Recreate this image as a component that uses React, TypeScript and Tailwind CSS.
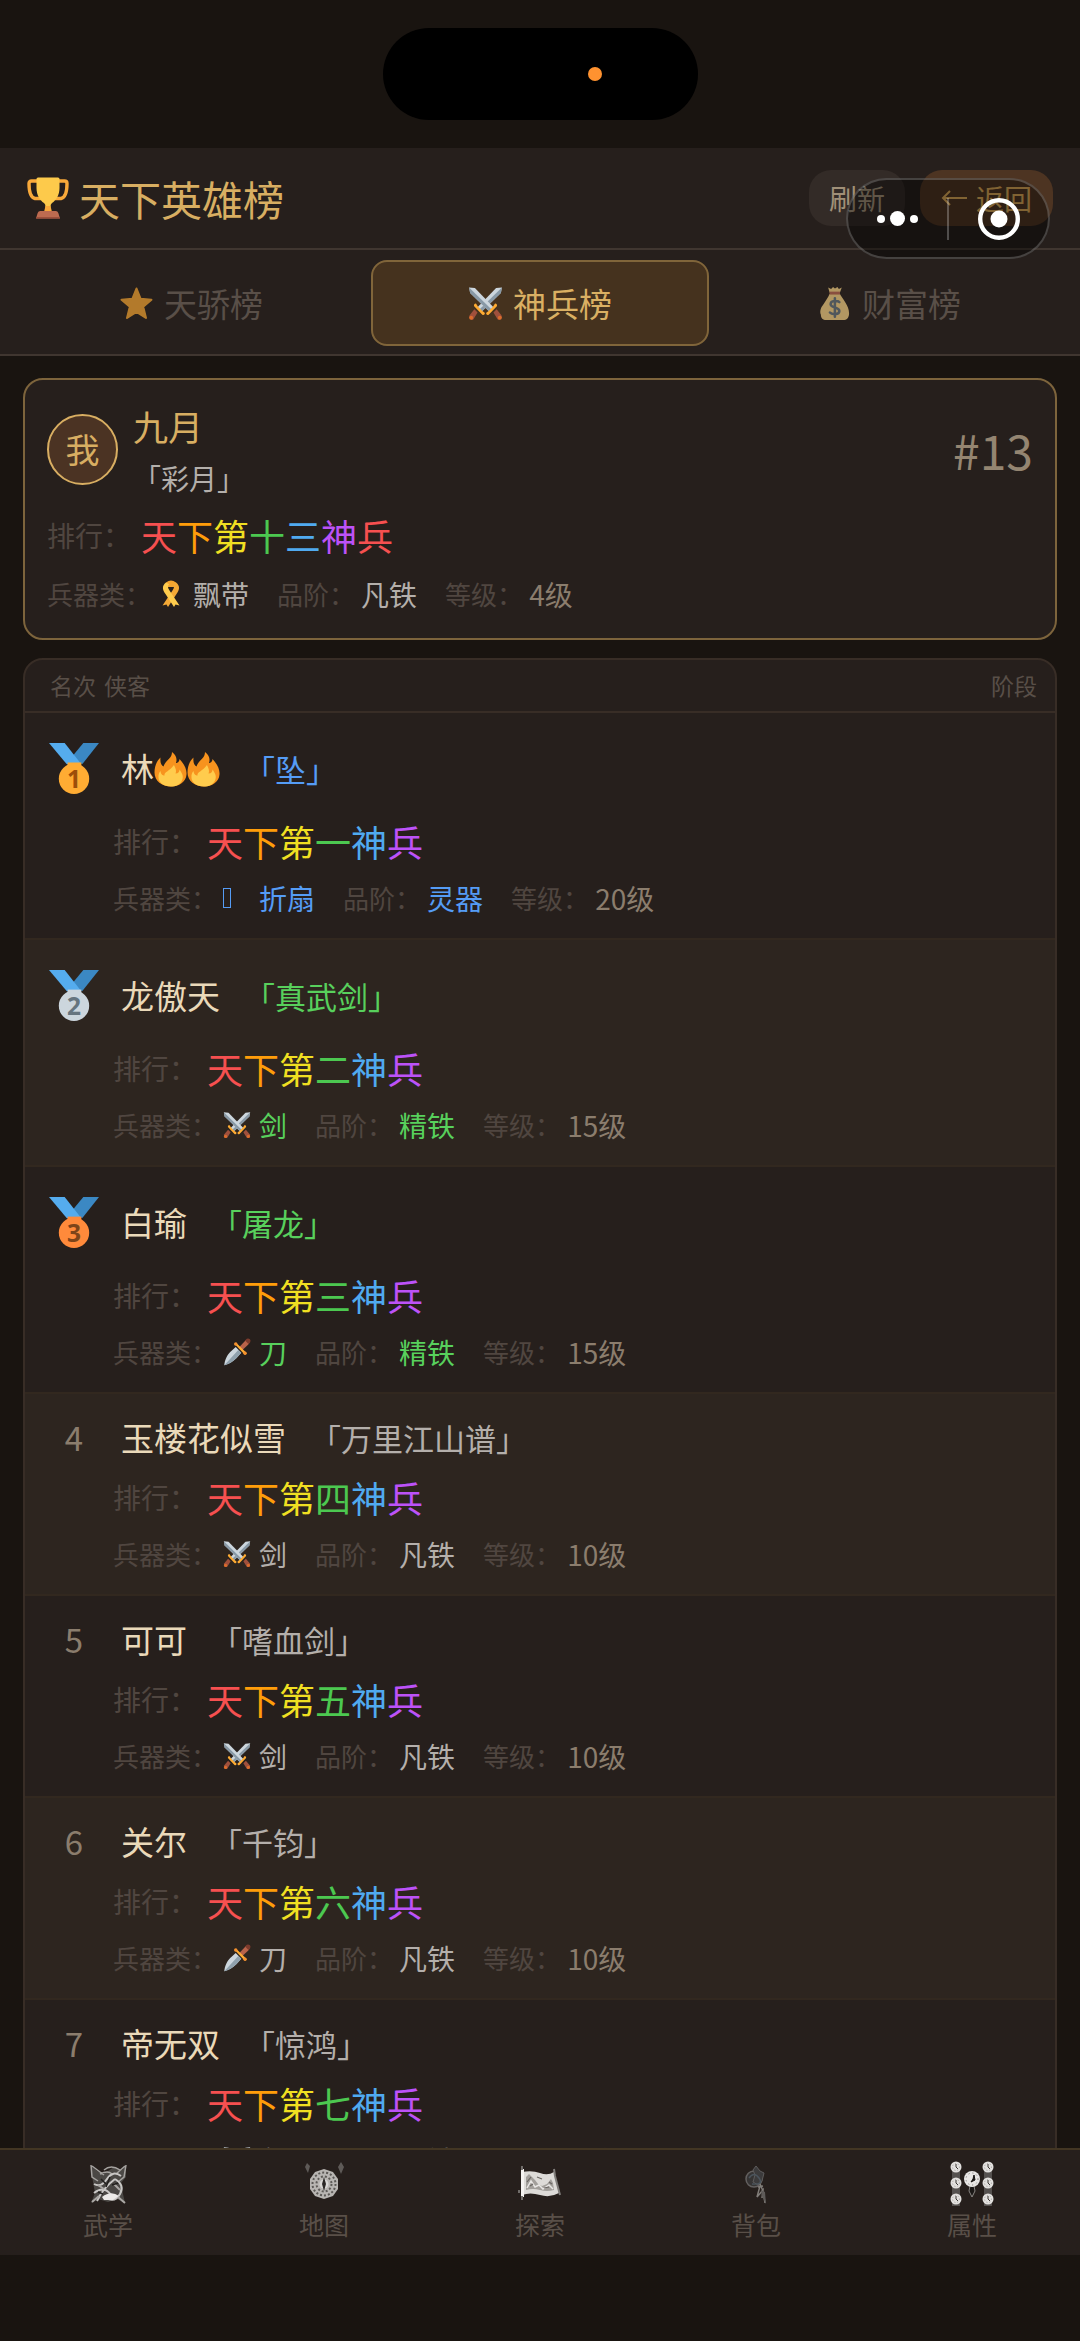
import { ReactNode, useState } from "react";

type IconProps = { className?: string };

type Weapon = {
  icon: "swords" | "dagger" | "ribbon" | "missing";
  type: string;
  grade: string;
  level: string;
  tone: string;
};

type Hero = Weapon & {
  rank: number;
  name: string;
  flames?: number;
  weapon: string;
  title: string;
};

const GREY = "text-[#b4afab]";
const GREEN = "text-[#58d05c]";
const BLUE = "text-[#559cf5]";

const TITLE_COLORS = [
  "text-[#f65050]",
  "text-[#ff9d0a]",
  "text-[#f0df22]",
  "text-[#4cc850]",
  "text-[#50aaf0]",
  "text-[#bc52f8]"
];

const heroes: Hero[] = [
  { rank: 1, name: "林", flames: 2, weapon: "坠", title: "天下第一神兵", icon: "missing", type: "折扇", grade: "灵器", level: "20级", tone: BLUE },
  { rank: 2, name: "龙傲天", weapon: "真武剑", title: "天下第二神兵", icon: "swords", type: "剑", grade: "精铁", level: "15级", tone: GREEN },
  { rank: 3, name: "白瑜", weapon: "屠龙", title: "天下第三神兵", icon: "dagger", type: "刀", grade: "精铁", level: "15级", tone: GREEN },
  { rank: 4, name: "玉楼花似雪", weapon: "万里江山谱", title: "天下第四神兵", icon: "swords", type: "剑", grade: "凡铁", level: "10级", tone: GREY },
  { rank: 5, name: "可可", weapon: "嗜血剑", title: "天下第五神兵", icon: "swords", type: "剑", grade: "凡铁", level: "10级", tone: GREY },
  { rank: 6, name: "关尔", weapon: "千钧", title: "天下第六神兵", icon: "dagger", type: "刀", grade: "凡铁", level: "10级", tone: GREY },
  { rank: 7, name: "帝无双", weapon: "惊鸿", title: "天下第七神兵", icon: "swords", type: "剑", grade: "凡铁", level: "10级", tone: GREY }
];

function Trophy({ className }: IconProps) {
  return (
    <svg viewBox="0 0 42 42" className={className} aria-hidden="true">
      <path d="M10 4H4.500Q2 4 2 6.500C2 14 4 20.500 8 21.500H14M32 4H37.500Q40 4 40 6.500C40 14 38 20.500 34 21.500H28" fill="none" stroke="#f9a93a" strokeWidth="3.400" strokeLinejoin="round" />
      <path d="M9.500 2Q9.500 0.500 11 0.500H31Q32.500 0.500 32.500 2V11C32.500 18 29 23.500 25 26Q23.500 27 23.500 30V35H18.500V30Q18.500 27 17 26C13 23.500 9.500 18 9.500 11Z" fill="#fdca4b" />
      <path d="M18.500 29H23.500L25 35H17Z" fill="#f9a93a" />
      <path d="M13 34H29Q31 34 31.500 36.500L33 41.500H9L10.500 36.500Q11 34 13 34Z" fill="#bd6b50" />
      <path d="M9.400 40H32.600L33 41.500H9Z" fill="#9c4f3b" />
    </svg>
  );
}

function Star({ className }: IconProps) {
  return (
    <svg viewBox="0 0 34 34" className={className} aria-hidden="true">
      <path d="M17 2.500L21 12.500L31.500 13.300L23.500 20.200L26.200 31L17 25.200L7.800 31L10.500 20.200L2.500 13.300L13 12.500Z" fill="#ffac33" stroke="#ffac33" strokeWidth="2" strokeLinejoin="round" />
    </svg>
  );
}

function MoneyBag({ className }: IconProps) {
  return (
    <svg viewBox="0 0 34 36" className={className} aria-hidden="true">
      <path d="M12 7L10.500 1.500L13.500 3L15.500 1L17.500 2.600L20 1L21.500 3L24.500 1.500L22.500 7Z" fill="#fdd888" />
      <path d="M12 8H22.500C25 13 32 20 32 28C32 33 29.500 35 26 35H8.500C5 35 3 33 3 29.500C1.500 26 3 22 5.500 19C8 15 10.500 12 12 8Z" fill="#fdd888" />
      <path d="M12 5.800H22.600V8.800H12Z" fill="#bf6952" />
      <path d="M22 16.500C20.500 15 13 14.500 13 18.700C13 22.500 22 21.500 22 25.700C22 30 14 29.500 12.300 27.300M17.400 12.500V31.500" fill="none" stroke="#67757f" strokeWidth="2.600" strokeLinecap="round" />
    </svg>
  );
}

function Swords({ className }: IconProps) {
  const half = (
    <>
      <path d="M1 1.500L6.500 2L24 20L20 24L2 6.500Z" fill="#ccd6dd" />
      <path d="M1 1.500L22 22L20 24L2 6.500Z" fill="#8899a6" />
      <path d="M24 25L27 22L31.500 27.500Q32.500 29.500 31 31Q29.500 32.500 28 31.500Z" fill="#a0503c" />
      <path d="M25.500 16.500Q28 17 27.200 19L19.500 27Q17.500 28 17 25.500Q18 24.500 19.500 23.500L23.500 19.500Z" fill="#ffac33" />
      <circle cx="30" cy="30" r="1.900" fill="#da6c2c" />
    </>
  );
  return (
    <svg viewBox="0 0 33 33" className={className} aria-hidden="true">
      <g transform="translate(33 0) scale(-1 1)">{half}</g>
      {half}
    </svg>
  );
}

function Dagger({ className }: IconProps) {
  return (
    <svg viewBox="0 0 33 33" className={className} aria-hidden="true">
      <path d="M1.500 32C2 26 5 20 8.500 16.500L15 10.500L21.500 17.500L16 23.500C12 28 6 31 1.500 32Z" fill="#ccd6dd" />
      <path d="M1.500 32L18 14L21.500 17.500L16 23.500C12 28 6 31 1.500 32Z" fill="#8fa1ad" />
      <path d="M18.500 11.500L27 2.500L31 6.500L22 15Z" fill="#b9634a" />
      <path d="M26 3L28 1Q30 0 31.800 1.600Q33 3.500 32 5L30 7Z" fill="#7d3b2c" />
      <path d="M14 7.500Q13.500 5.500 15.500 5.500L27.500 17.500Q27.500 19.800 25.500 19.300Z" fill="#ffac33" />
      <circle cx="15" cy="7" r="2" fill="#f5912e" />
      <circle cx="26" cy="18" r="2" fill="#f5912e" />
    </svg>
  );
}

function Ribbon({ className }: IconProps) {
  return (
    <svg viewBox="0 0 28 28" className={className} aria-hidden="true">
      <path d="M9 2.500Q14-1.500 19 2.500L20 7H8Z" fill="#f4a52f" />
      <path d="M19 2.500C23.500 6 22.500 10 19.500 14L11 27L9.500 24.500L5.500 25.500L15.500 10.500C17.500 7.500 17.500 5.500 15.800 4.200Z" fill="#f4a936" />
      <path d="M9 2.500C4.500 6 5.500 10 8.500 14L17 27L18.500 24.500L22.500 25.500L12.500 10.500C10.500 7.500 10.500 5.500 12.200 4.200Z" fill="#ffcc4d" />
    </svg>
  );
}

function Flame({ className }: IconProps) {
  return (
    <svg viewBox="0 0 33 36" className={className} aria-hidden="true">
      <path d="M18 1C23 5 23 9 22 12C24.500 12 25.500 9.500 25.500 8C30 13 33 18 32.500 23.500C32 31 25 35.500 17 35.500C8 35.500 0.500 30 0.500 21.500C0.500 15.500 2.500 10 6.500 6.500C6 11 7 14 9.500 15.500C11.500 9 18 8 18 1Z" fill="#f7931e" />
      <path d="M20 14C22 18 22.500 20 21.500 22.500C24.500 22.500 25.500 20.500 25.500 18.500C28 22 30 25.500 28 29.500C26 33.500 22 35.500 17 35.500C9.500 35.500 5 31.500 4.500 27C4.200 24 5 21.500 6.500 20C7 23.500 8.500 24.500 10.500 24.500C10 20.500 15 21 20 14Z" fill="#ffcc4d" />
    </svg>
  );
}

const medalTones = [
  { disc: "fill-[#ffac33]", digit: "fill-[#9c4e09]" },
  { disc: "fill-[#ccd6dd]", digit: "fill-[#66757f]" },
  { disc: "fill-[#ff8a3b]", digit: "fill-[#7c4419]" }
];

function Medal({ place, className }: IconProps & { place: number }) {
  const tone = medalTones[place - 1];
  return (
    <svg viewBox="0 0 51 53" className={className} role="img" aria-label={`${place}`}>
      <path d="M35 0.500H51L34 22L26 19L23 15Z" fill="#3b88c3" />
      <path d="M0 0.500H16L32 21L26 25L18 22Z" fill="#55acee" />
      <path d="M19 20.500H33V26H19Z" className={tone.disc} />
      <circle cx="25.500" cy="37" r="15.500" className={tone.disc} />
      <text x="25.500" y="46" textAnchor="middle" className={`font-['Noto_Sans'] text-[25px] font-bold ${tone.digit}`}>
        {place}
      </text>
    </svg>
  );
}

// Beast-head emblem with a twisted sash
function MartialIcon({ className }: IconProps) {
  return (
    <svg viewBox="0 0 44 46" className={className} fill="none" aria-hidden="true">
      <path d="M5 5L11 10L17 13L22 10L28 6L36 9L40 4L40 16L35 22L37 33L39 42L31 38L22 41L12 38L5 42L9 32L7 21Z" fill="#4b4845" />
      <path d="M5 4L6 16L12 20M40 4L38 16L32 21M6 5L18 14M39 5L30 13M18 9Q25 3 34 9M14 13Q22 9 26 13" stroke="#a5a29f" strokeWidth="1.500" />
      <path d="M8 23Q15 27 21 18T35 15M11 40Q17 27 29 18M8 32Q18 24 25 34M29 18Q39 24 34 33T20 37" stroke="#c9c7c5" strokeWidth="2" />
      <path d="M16 36Q25 29 33 35L27 39L18 39Z" fill="#eceae8" />
      <path d="M6 41L13 35M39 42L32 36M12 24L18 28M28 23L34 29" stroke="#aaa7a4" strokeWidth="2" />
      <path d="M15 18L20 23M24 16L20 26M26 24L32 22M12 31L17 33" stroke="#22201e" strokeWidth="1.500" />
    </svg>
  );
}

// Octagonal feng-shui compass
function MapIcon({ className }: IconProps) {
  return (
    <svg viewBox="0 0 44 46" className={className} fill="none" aria-hidden="true">
      <path d="M5 2L8 5L6 12L3 6ZM39 1L42 6L39 13L36 6Z" fill="#5e5a57" />
      <path d="M22 8L31 11L36 18L36 28L31 35L22 38L13 35L8 28L8 18L13 11Z" fill="#b8b5b2" />
      <circle cx="22" cy="23" r="11.500" stroke="#5b5855" strokeWidth="2" strokeDasharray="2 2" />
      <circle cx="22" cy="23" r="7.500" stroke="#5e5b58" strokeWidth="2" strokeDasharray="2 2" />
      <circle cx="22" cy="23" r="4.500" fill="#dad8d6" />
      <path d="M22 16L24 23L22 30L20 23Z" fill="#2b2826" />
    </svg>
  );
}

// Unrolled landscape scroll
function ExploreIcon({ className }: IconProps) {
  return (
    <svg viewBox="0 0 44 46" className={className} fill="none" aria-hidden="true">
      <path d="M4 11Q14 9 22 12T36 11L41 32Q32 37 22 34T4 34Z" fill="#dddbd8" />
      <path d="M8 16L11 13L14 16L17 19L20 23L24 25L29 23L33 18L35 22L36 29Q29 31 22 29T8 29Z" fill="#a29f9b" />
      <path d="M9 27L13 20L17 26L21 24L25 28L31 24L35 28" stroke="#e8e6e4" strokeWidth="1.500" />
      <path d="M9 21L13 16M12 25L15 23M26 27L31 26M19 16L24 18M31 21L34 23" stroke="#6b6764" strokeWidth="1.200" />
      <path d="M3 8H6V36H3Z" fill="#f5f3f1" />
      <path d="M4 5V9M4 35V39M1 29V32" stroke="#716d6a" strokeWidth="2" />
      <path d="M36 8L37 15L42 34" stroke="#817e7b" strokeWidth="2" />
    </svg>
  );
}

// Jade pendant with a tassel
function BagIcon({ className }: IconProps) {
  return (
    <svg viewBox="0 0 44 46" className={className} fill="none" aria-hidden="true">
      <circle cx="20" cy="18" r="8" fill="#363434" stroke="#63605f" strokeWidth="1.500" />
      <path d="M19 9L22 5L26 10L30 12L28 20L24 24L19 21L21 14Z" fill="#3c3b3c" stroke="#5e5c5c" />
      <path d="M15 17Q20 10 25 17T18 23" stroke="#4b545c" strokeWidth="1.500" />
      <path d="M26 23L29 30L31 42M26 25L23 36L29 29L28 37M24 26L29 25" stroke="#817d79" strokeWidth="1.500" />
      <path d="M27 29L31 31L32 43L28 35Z" fill="#5e5a58" />
    </svg>
  );
}

// Two stacks of dials round a central clock
function StatsIcon({ className }: IconProps) {
  return (
    <svg viewBox="0 0 44 48" className={className} fill="none" aria-hidden="true">
      {[6, 38].map((x) => (
        <g key={x}>
          <path d={`M${x - 4} 8H${x + 4}V46H${x - 4}Z`} fill="#55514f" />
          {[7, 23, 39].map((y) => (
            <g key={y}>
              <circle cx={x} cy={y} r="5.500" fill="#e2e0de" />
              <circle cx={x} cy={y} r="3.500" stroke="#a5a19d" strokeDasharray="1 2" />
              <path d={`M${x} ${y - 3}V${y}L${x + 2} ${y + 2}`} stroke="#3c3835" />
            </g>
          ))}
        </g>
      ))}
      <path d="M20 26H24L25 31L22 37L19 31Z" fill="#1b1816" stroke="#898582" />
      <circle cx="22" cy="19" r="8" fill="#e8e6e4" />
      <circle cx="22" cy="19" r="6" stroke="#77736f" strokeDasharray="1 3" />
      <path d="M24 15L23 19L21 22L25 20Z" fill="#171412" stroke="#171412" />
    </svg>
  );
}

function WeaponIcon({ icon }: { icon: Weapon["icon"] }) {
  if (icon === "swords") return <Swords className="size-7" />;
  if (icon === "dagger") return <Dagger className="size-7" />;
  if (icon === "ribbon") return <Ribbon className="size-7" />;
  return (
    <span className="flex w-7">
      <span className="h-5 w-2 border border-current" />
    </span>
  );
}

function Field({ label, children }: { label: string; children: ReactNode }) {
  return (
    <div className="flex items-center gap-[6px]">
      <dt className="text-[26px] text-[#504640]">{label}：</dt>
      <dd className="flex items-center gap-2 text-[28px]">{children}</dd>
    </div>
  );
}

function RankTitle({ title }: { title: string }) {
  return (
    <p className="flex h-[46px] items-center gap-[10px] text-[28px] text-[#504640]">
      排行：
      <span className="text-[36px]">
        {title.split("").map((char, index) => (
          <span key={index} className={TITLE_COLORS[index % TITLE_COLORS.length]}>
            {char}
          </span>
        ))}
      </span>
    </p>
  );
}

function WeaponStats({ icon, type, grade, level, tone }: Weapon) {
  return (
    <dl className="flex h-10 items-center gap-7">
      <Field label="兵器类">
        <span className={`flex items-center gap-2 ${tone}`}>
          <WeaponIcon icon={icon} />
          {type}
        </span>
      </Field>
      <Field label="品阶">
        <span className={tone}>{grade}</span>
      </Field>
      <Field label="等级">
        <span className="text-[#8b7d6d]">{level}</span>
      </Field>
    </dl>
  );
}

function HeroRow({ hero }: { hero: Hero }) {
  const hasMedal = hero.rank <= 3;
  return (
    <li className="flex flex-col gap-[14px] border-b-2 border-[#32281f] px-6 py-5 odd:bg-[#261f1c] even:bg-[#2d251f]">
      <div className={`flex items-center ${hasMedal ? "h-[71px]" : "h-[46px]"}`}>
        <span className="flex w-[50px] justify-center text-[33px] text-[#8b7d6d]">
          {hasMedal ? <Medal place={hero.rank} className="h-[53px] w-[51px]" /> : hero.rank}
        </span>
        <span className="ml-[22px] flex items-center text-[33px] text-[#ead9b9]">
          {hero.name}
          {Array.from({ length: hero.flames ?? 0 }, (_, index) => (
            <Flame key={index} className="h-9 w-[33px]" />
          ))}
        </span>
        <span className={`ml-6 text-[31px] ${hero.tone}`}>「{hero.weapon}」</span>
      </div>
      <div className="flex flex-col gap-[14px] pl-16">
        <RankTitle title={hero.title} />
        <WeaponStats {...hero} />
      </div>
    </li>
  );
}

const tabs = [
  { key: "talent", label: "天骄榜", Icon: Star },
  { key: "weapon", label: "神兵榜", Icon: Swords },
  { key: "wealth", label: "财富榜", Icon: MoneyBag }
];

const navItems = [
  { label: "武学", Icon: MartialIcon },
  { label: "地图", Icon: MapIcon },
  { label: "探索", Icon: ExploreIcon },
  { label: "背包", Icon: BagIcon },
  { label: "属性", Icon: StatsIcon }
];

export default function App() {
  const [activeTab, setActiveTab] = useState("weapon");

  return (
    <div className="flex h-screen flex-col overflow-hidden bg-[#191410] pb-[86px] font-['Noto_Sans_CJK_SC',sans-serif] leading-none">
      <div className="flex h-[148px] shrink-0 justify-center pt-7">
        <div className="flex h-[92px] w-[315px] items-center justify-end rounded-full bg-black pr-24">
          <span className="size-[14px] rounded-full bg-[#ff9230]" />
        </div>
      </div>

      <header className="relative flex h-[102px] shrink-0 items-center justify-between border-b-2 border-[#403630] bg-[#261f1c] px-[27px]">
        <h1 className="flex items-center gap-[10px] text-[41px] text-[#d8ae62]">
          <Trophy className="size-[42px]" />
          天下英雄榜
        </h1>
        <div className="flex gap-[15px] text-[28px]">
          <button type="button" className="h-14 rounded-[22px] bg-[#332b27] px-5 text-[#a09078]">
            刷新
          </button>
          <button type="button" className="flex h-14 items-center gap-2 rounded-[22px] bg-[#4d3422] px-[21px] text-[#d8a656]">
            <svg viewBox="0 0 27 16" className="h-4 w-[27px]" fill="none" stroke="currentColor" strokeWidth="2" aria-hidden="true">
              <path d="M9 1L2 8L9 15M2 8H26" />
            </svg>
            返回
          </button>
        </div>

        {/* mini-program capsule floats over the header */}
        <div className="absolute top-[30px] right-[30px] z-10 flex h-[81px] w-[204px] items-center rounded-full border-2 border-white/20 bg-black/40">
          <button type="button" aria-label="更多" className="flex flex-1 items-center justify-center gap-[5px]">
            <span className="size-2 rounded-full bg-white" />
            <span className="size-[15px] rounded-full bg-white" />
            <span className="size-2 rounded-full bg-white" />
          </button>
          <span className="h-[42px] w-[2px] bg-white/25" />
          <button type="button" aria-label="关闭" className="flex flex-1 justify-center">
            <svg viewBox="0 0 42 42" className="size-[42px]" aria-hidden="true">
              <circle cx="21" cy="21" r="18.800" fill="none" stroke="#fff" strokeWidth="4.400" />
              <circle cx="21" cy="21" r="8.500" fill="#fff" />
            </svg>
          </button>
        </div>
      </header>

      <div role="tablist" className="flex shrink-0 gap-[11px] border-b-2 border-[#403630] bg-[#261f1c] px-[22px] pt-[10px] pb-2">
        {tabs.map(({ key, label, Icon }) => (
          <button
            key={key}
            type="button"
            role="tab"
            aria-selected={activeTab === key}
            onClick={() => setActiveTab(key)}
            className={`flex h-[86px] flex-1 items-center justify-center gap-[10px] rounded-2xl border-2 text-[33px] ${
              activeTab === key
                ? "border-[#80653a] bg-[#45321e] text-[#dab063]"
                : "border-transparent text-[#594f48]"
            }`}
          >
            <Icon className={`size-[35px] ${activeTab === key ? "" : "opacity-65"}`} />
            {label}
          </button>
        ))}
      </div>

      <main className="flex min-h-0 flex-1 flex-col gap-[18px] overflow-hidden px-[23px] pt-[22px]">
        <section className="flex shrink-0 flex-col gap-4 rounded-[20px] border-2 border-[#7d643c] bg-[#261f1c] px-[22px] pt-[22px] pb-6">
          <div className="flex items-center">
            <span className="flex size-[71px] items-center justify-center rounded-full border-2 border-[#d8ae62] bg-[#4b3323] text-[34px] text-[#d8ae62]">
              我
            </span>
            <div className="ml-[15px] flex flex-col gap-3">
              <h2 className="flex h-[46px] items-center text-[35px] text-[#d8ae62]">九月</h2>
              <p className="flex h-9 items-center text-[28px] text-[#b4afab]">「彩月」</p>
            </div>
            <span className="ml-auto text-[48px] text-[#948571]">#13</span>
          </div>
          <RankTitle title="天下第十三神兵" />
          <WeaponStats icon="ribbon" type="飘带" grade="凡铁" level="4级" tone={GREY} />
        </section>

        <section className="flex shrink-0 flex-col overflow-hidden rounded-[20px] border-2 border-[#382d26] bg-[#261f1c]">
          <div className="flex h-[53px] items-center justify-between border-b-2 border-[#382d26] pr-[18px] pl-[25px] text-[23px] text-[#594f48]">
            <span className="flex gap-2">
              <span>名次</span>
              <span>侠客</span>
            </span>
            <span>阶段</span>
          </div>
          <ol>
            {heroes.map((hero) => (
              <HeroRow key={hero.rank} hero={hero} />
            ))}
          </ol>
        </section>
      </main>

      <nav className="flex h-[107px] shrink-0 border-t-2 border-[#433623] bg-[#261f1c]">
        {navItems.map(({ label, Icon }) => (
          <button key={label} type="button" className="flex flex-1 flex-col items-center gap-1 pt-[10px] text-[25px] text-[#594f48]">
            <Icon className="h-[48px] w-11" />
            {label}
          </button>
        ))}
      </nav>
    </div>
  );
}
